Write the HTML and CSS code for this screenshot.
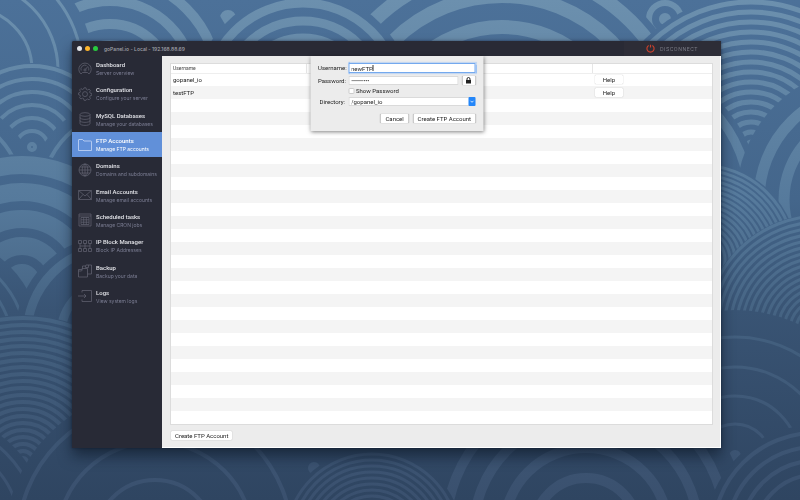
FILE: index.html
```html
<!DOCTYPE html>
<html lang="en">
<head>
<meta charset="utf-8">
<title>goPanel.io - Local</title>
<link rel="stylesheet" href="styles.css">
</head>
<body>
<svg class="wallpaper" viewBox="0 0 800 500" preserveAspectRatio="xMidYMid slice" aria-hidden="true">
  <defs>
    <linearGradient id="base" gradientUnits="userSpaceOnUse" x1="0" y1="0" x2="0" y2="500">
      <stop offset="0" stop-color="#4c7199"/><stop offset=".4" stop-color="#44668b"/><stop offset=".62" stop-color="#395474"/><stop offset="1" stop-color="#2f4561"/>
    </linearGradient>
    <linearGradient id="stripe" gradientUnits="userSpaceOnUse" x1="0" y1="0" x2="0" y2="500">
      <stop offset="0" stop-color="#6c90ae"/><stop offset=".4" stop-color="#567a9c"/><stop offset=".66" stop-color="#43607f"/><stop offset="1" stop-color="#3a506e"/>
    </linearGradient>
  </defs>
  <rect width="800" height="500" fill="url(#base)"/>
  <g id="fans" fill="url(#base)" stroke="url(#stripe)"></g>
</svg>

<div class="desktop">
<div class="window">
  <header class="titlebar">
    <span class="light close"></span><span class="light minimize"></span><span class="light zoom"></span>
    <h1>goPanel.io - Local - 192.168.88.69</h1>
    <button class="disconnect" type="button">
      <svg viewBox="0 0 10 10"><path d="M3 1.6A4 4 0 1 0 7 1.6M5 .7V4"/></svg>
      DISCONNECT
    </button>
  </header>

  <nav class="sidebar">
    <a href="#dashboard"><svg viewBox="0 0 14 14"><path d="M3 12A6.2 6.2 0 1 1 11 12L9.5 10.5H4.500ZM3.200 8.500A3.900 3.900 0 0 1 8.500 3.500M10.200 5.200A3.900 3.900 0 0 1 10.700 8.500M7.600 7.300 10 4.200"/><circle cx="7" cy="8" r="1.100"/></svg><span><b>Dashboard</b><small>Server overview</small></span></a>
    <a href="#configuration"><svg viewBox="0 0 14 14"><path d="M6 .8h2l.4 1.700 1.200.5 1.500-.9 1.300 1.300-.8 1.500.5 1.200 1.600.4v1.900l-1.600.4-.5 1.200.8 1.500-1.300 1.300-1.500-.8-1.200.5L8 13.300H6l-.4-1.700-1.200-.5-1.500.9-1.300-1.300.8-1.500-.5-1.200-1.500-.4V6l1.500-.4.5-1.200-.8-1.500L2.900 1.600l1.500.9 1.200-.5Z"/><circle cx="7" cy="7.100" r="2.500"/></svg><span><b>Configuration</b><small>Configure your server</small></span></a>
    <a href="#mysql"><svg viewBox="0 0 14 14"><ellipse cx="7" cy="2.500" rx="5" ry="1.800"/><path d="M2 2.500V11.500C2 14 12 14 12 11.500V2.500M2 5.500C2 8 12 8 12 5.500M2 8.500C2 11 12 11 12 8.500"/></svg><span><b>MySQL Databases</b><small>Manage your databases</small></span></a>
    <a href="#ftp" class="active" aria-current="page"><svg viewBox="0 0 14 14"><path d="M.5 12.500V2Q.5 1.500 1 1.500H4.500L6 3H13Q13.500 3 13.500 3.500V12.500Z"/></svg><span><b>FTP Accounts</b><small>Manage FTP accounts</small></span></a>
    <a href="#domains"><svg viewBox="0 0 14 14"><circle cx="7" cy="7" r="6"/><ellipse cx="7" cy="7" rx="2.800" ry="6"/><path d="M1 7H13M7 1V13M2 4H12M2 10H12"/></svg><span><b>Domains</b><small>Domains and subdomains</small></span></a>
    <a href="#email"><svg viewBox="0 0 14 14"><path d="M.6 2.500H13.400V11.500H.6ZM.6 2.500 7 8 13.400 2.500M.6 11.500 5 6.500M13.400 11.500 9 6.500"/></svg><span><b>Email Accounts</b><small>Manage email accounts</small></span></a>
    <a href="#tasks"><svg viewBox="0 0 14 14"><path d="M1 1H13V13H1ZM1 3H13M3 4.500H11V11.500H3ZM5.700 4.500V11.500M8.300 4.500V11.500M3 6.800H11M3 9.200H11"/></svg><span><b>Scheduled tasks</b><small>Manage CRON jobs</small></span></a>
    <a href="#ipblock"><svg viewBox="0 0 14 14"><path d="M.5 1.500H3.500V4.500H.5ZM5.500 1.500H8.500V4.500H5.500ZM10.500 1.500H13.500V4.500H10.500ZM.5 9.500H3.500V12.500H.5ZM5.500 9.500H8.500V12.500H5.500ZM10.500 9.500H13.500V12.500H10.500ZM2 4.500V9.500M7 4.500V9.500M12 4.500V9.500M2 7H12"/></svg><span><b>IP Block Manager</b><small>Block IP Addresses</small></span></a>
    <a href="#backup"><svg viewBox="0 0 14 14"><path d="M.5 5.500H4V4.500H9.500V13H.5ZM.5 7H3.500L4.500 5.500M4.500 4.500V2H7.500L8 1H13.500V10H9.500M7.500 2V3.500H10.500V1"/></svg><span><b>Backup</b><small>Backup your data</small></span></a>
    <a href="#logs"><svg viewBox="0 0 14 14"><path d="M4 3.500V1.500H13.500V12.500H4V10.500M0 7H8M6 5 8 7 6 9"/></svg><span><b>Logs</b><small>View system logs</small></span></a>
  </nav>

  <main class="content">
    <div class="panel">
      <table>
        <colgroup><col class="c-user"><col class="c-info"><col class="c-help"></colgroup>
        <thead><tr><th>Username</th><th></th><th></th></tr></thead>
        <tbody>
          <tr><td>gopanel_io</td><td></td><td><button class="btn help" type="button">Help</button></td></tr>
          <tr><td>testFTP</td><td></td><td><button class="btn help" type="button">Help</button></td></tr>
        </tbody>
      </table>
    </div>
    <footer><button class="btn" type="button">Create FTP Account</button></footer>
  </main>

  <form class="sheet">
    <label for="user">Username:</label>
    <div class="field focused"><input id="user" type="text" value="newFTP"></div>
    <label for="pass">Password:</label>
    <div class="field pass"><input id="pass" type="password" value="secret123">
      <button class="btn lock" type="button" aria-label="Generate password"><svg viewBox="0 0 6 7"><path class="shackle" d="M1.500 3.500V2A1.500 1.500 0 0 1 4.500 2V3.500"/><path class="body" d="M.5 3H5.500V6.500H.5Z"/></svg></button></div>
    <div class="show"><input id="show" type="checkbox"><label for="show">Show Password</label></div>
    <label for="dir">Directory:</label>
    <div class="field combo"><select id="dir"><option>/gopanel_io</option></select><svg viewBox="0 0 7 8" aria-hidden="true"><path d="M2 3.300 3.500 4.800 5 3.300"/></svg></div>
    <div class="actions"><button class="btn" type="button">Cancel</button><button class="btn" type="button">Create FTP Account</button></div>
  </form>
</div>
</div>
<script src="wallpaper.js"></script>
</body>
</html>
```
FILE: wallpaper.js
```js
// Each fan: centre x, centre y, radius of the base disc, stripe width, stripe radii.
const steps = (from, to, step) => {
  const radii = [];
  for (let r = from; r <= to; r += step) radii.push(r);
  return radii;
};
const fans = [
  [228, 18, 9, 8, [4]],
  [665, 19, 23, 6, [16, 3]],
  [110, 85, 130, 10, [108, 84, 61, 40]],
  [-30, 70, 124, 3, [112, 88, 62]],
  [502, 150, 196, 14, [182, 154, 123, 94]],
  [303, 100, 109, 9, [97, 79, 62]],
  [751, 145, 150, 5, steps(3, 143, 10)],
  [620, 200, 140, 9, [129]],
  [870, 200, 134, 11, [111, 86, 60]],
  [32, 147, 84, 4, steps(3, 82, 13)],
  [125, 195, 96, 4, [83]],
  [-60, 195, 98, 4, [82]],
  [22, 282, 128, 18, [9, 36, 63, 90, 117]],
  [-70, 345, 112, 3, [96, 82]],
  [115, 335, 100, 9, [88, 54]],
  [700, 260, 98, 3, steps(15, 96, 5)],
  [820, 330, 116, 3, steps(24, 114, 6)],
  [735, 460, 150, 3, [123, 93, 64, 36]],
  [23, 462, 147, 4, steps(4, 144, 7)],
  [-70, 530, 118, 3, [108, 90]],
  [314, 468, 7, 6, [3]],
  [155, 540, 150, 4, [60, 98, 137]],
  [735, 456, 7, 6, [3]],
  [586, 530, 163, 10, [52, 82, 112, 140]],
  [372, 540, 91, 3, steps(38, 86, 6)],
  [815, 535, 110, 4, [102, 88, 74, 60]]
];
const layer = document.getElementById("fans");
const circle = (cx, cy, r, attrs) => {
  const c = document.createElementNS("http://www.w3.org/2000/svg", "circle");
  Object.entries({ cx, cy, r, ...attrs }).forEach(([k, v]) => c.setAttribute(k, v));
  layer.append(c);
};
fans.forEach(([x, y, base, width, radii]) => {
  circle(x, y, base, { stroke: "none" });
  radii.forEach(r => circle(x, y, r, { fill: "none", "stroke-width": width }));
});
```
FILE: styles.css
```css
* { box-sizing: border-box; }
body { margin: 0; font-family: Roboto, "Liberation Sans", sans-serif; font-size: 6px; line-height: 8px; color: #222; background: #3f5f83; }
button, input, select { font: inherit; color: inherit; margin: 0; }
.wallpaper { position: fixed; inset: 0; width: 100%; height: 100%; }
.desktop { position: relative; display: grid; min-height: 100vh; padding: 41px 79px 52px 72px; }
.window { position: relative; display: grid; grid-template: auto 1fr / 90px 1fr; background: linear-gradient(90deg, #282a36 90px, #ececec 90px); border-radius: 2px 2px 0 0; box-shadow: 0 8px 14px rgba(8, 16, 30, .55), 0 0 3px rgba(8, 16, 30, .5); }

.titlebar { grid-column: 1 / -1; display: flex; align-items: center; gap: 3px; height: 15px; padding-left: 5px; background: #292a35; border-radius: 2px 2px 0 0; color: #a3a4ac; font-family: Inter, "Liberation Sans", sans-serif; }
.titlebar h1 { flex: 1; margin: 0 0 0 3px; font-size: 5px; font-weight: 500; }
.light { width: 5px; height: 5px; border-radius: 50%; }
.close { background: #e4e6ea; }
.minimize { background: #fdb52c; }
.zoom { background: #28cb3f; }
.disconnect { display: flex; align-items: center; gap: 5px; width: 97px; height: 15px; padding: 0 0 0 22px; border: 0; background: #2d2d37; color: #7c7d87; font-size: 5px; letter-spacing: 0.5px; }
.disconnect svg { width: 9px; height: 9px; fill: none; stroke: #c8402c; stroke-width: 1.3; }

.sidebar { display: grid; align-content: start; grid-template-rows: repeat(10, 1fr); height: 253px; color: #e2e3e8; }
.sidebar a { display: flex; align-items: center; gap: 4px; padding-left: 6px; color: inherit; text-decoration: none; }
.sidebar svg { width: 14px; height: 14px; fill: none; stroke: #646674; stroke-width: .7; }
.sidebar b, .sidebar small { display: block; white-space: nowrap; }
.sidebar b { font-size: 6px; font-weight: 500; line-height: 9px; }
.sidebar small { font-family: Inter, "Liberation Sans", sans-serif; font-size: 5px; line-height: 8px; color: #7c7e94; }
.sidebar .active { background: #6190d9; color: #fff; }
.sidebar .active small { color: #fff; }
.sidebar .active svg { stroke: #d5e3fa; }

.content { display: flex; flex-direction: column; padding: 7px 7px 7px 8px; border-right: 1px solid #fff; border-bottom: 1px solid #fff; }
.panel { flex: 1; border: 1px solid #dcdcdc; background: repeating-linear-gradient(#fff 0 13px, #f4f4f4 13px 26px) 0 9px; }
table { width: 100%; border-collapse: collapse; table-layout: fixed; }
.c-user { width: 25%; }
.c-help { width: 22%; }
th { height: 9px; padding: 0 2px; background: #fff; border-bottom: 1px solid #eee; text-align: left; font-size: 5px; font-weight: 400; line-height: 8px; color: #444; }
th + th { border-left: 1px solid #e6e6e6; }
td { height: 13px; padding: 0 2px; line-height: 10px; }
footer { display: flex; padding: 6px 1px 0; }

.btn { min-width: 28px; height: 9px; padding: 0 4px; border: 0; border-radius: 1px; background: #fff; box-shadow: 0 0 1px rgba(0, 0, 0, .4); line-height: 9px; white-space: nowrap; }
.help { display: block; }

.sheet { position: absolute; top: 15px; left: 50%; transform: translateX(-50%); display: grid; grid-template-columns: 27px 127px; column-gap: 3px; row-gap: 3px; align-items: center; padding: 7px 8px; background: #ececec; box-shadow: 0 1px 4px rgba(0, 0, 0, .5); }
.sheet > label { text-align: right; white-space: nowrap; }
.field { position: relative; display: flex; gap: 4px; }
.field input, .field select { flex: 1; min-width: 0; height: 9px; padding: 0 2px; border: 1px solid #dadada; border-radius: 0; background: #fff; line-height: 7px; appearance: none; outline: 0; }
.field.focused input { height: 10px; border-color: #74a9ee; box-shadow: 0 0 1px 1px #9cc3f5; }
.focused::after { content: ""; position: absolute; left: 24px; top: 2px; width: 1px; height: 6px; background: #333; }
.lock { display: grid; place-items: center; min-width: 13px; padding: 0; }
.lock svg { width: 6px; height: 7px; }
.shackle { fill: none; stroke: #222; }
.body { fill: #222; }
.show { grid-column: 2; display: flex; align-items: center; gap: 2px; height: 6px; }
.show input { appearance: none; width: 6px; height: 6px; border: 1px solid #ccc; border-radius: 1px; background: #fff; }
.combo svg { position: absolute; top: 0; right: 0; width: 7px; height: 9px; border-radius: 1px; background: #2386f9; fill: none; stroke: #fff; stroke-width: .8; pointer-events: none; }
.actions { grid-column: 1 / -1; display: flex; justify-content: flex-end; gap: 5px; padding: 5px 0 1px; }
```
